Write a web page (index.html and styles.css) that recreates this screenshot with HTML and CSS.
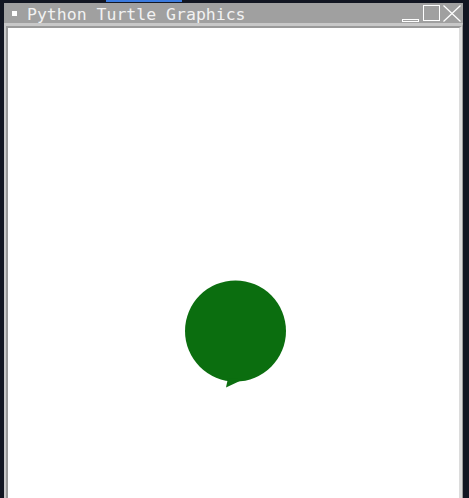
FILE: index.html
```html
<!DOCTYPE html>
<html>
<head>
<meta charset="utf-8">
<link rel="stylesheet" href="styles.css">
</head>
<body>
<div class="topstrip"><div class="tab"></div></div>
<div class="window">
  <div class="titlebar">
    <span class="menu-dot"></span>
    <span class="title">Python Turtle Graphics</span>
    <div class="controls">
      <span class="btn-min"></span>
      <span class="btn-max"></span>
      <svg class="btn-close" width="18" height="17" viewBox="0 0 18 17">
        <path d="M0.5 0.5 L17.5 16.5 M17.5 0.5 L0.5 16.5" stroke="#ffffff" stroke-width="1.2" fill="none"/>
      </svg>
    </div>
  </div>
  <div class="frame">
    <div class="canvas">
      <svg class="drawing" width="451" height="470" viewBox="0 0 451 470">
        <circle cx="227.5" cy="303" r="50.5" fill="#0b6e0f"/>
        <polygon points="218,359.5 220,350 235,351.5" fill="#0b6e0f"/>
      </svg>
    </div>
  </div>
</div>
</body>
</html>
```
FILE: styles.css
```css
html, body {
  margin: 0;
  padding: 0;
  background: #121622;
  width: 469px;
  height: 498px;
  overflow: hidden;
}
.topstrip {
  height: 3px;
  position: relative;
}
.tab {
  margin-left: 106px;
  width: 76px;
  height: 2px;
  background: #3b7be0;
}
.window {
  margin-left: 4px;
  width: 459px;
}
.titlebar {
  height: 20px;
  background: #a0a0a0;
  display: flex;
  align-items: center;
}
.menu-dot {
  width: 5px;
  height: 5px;
  background: #ffffff;
  margin-left: 8px;
  margin-top: 1px;
}
.title {
  margin-left: 10px;
  margin-top: 3px;
  font-family: "DejaVu Sans Mono", monospace;
  font-size: 16.5px;
  color: #f2f2f2;
  line-height: 20px;
  white-space: nowrap;
}
.controls {
  margin-left: auto;
  display: flex;
  align-items: flex-start;
  height: 20px;
  padding-top: 2px;
  box-sizing: border-box;
  margin-right: 2px;
}
.btn-min {
  width: 15px;
  height: 1px;
  border: 1px solid #ffffff;
  margin-top: 14px;
  margin-right: 4px;
}
.btn-max {
  width: 15px;
  height: 14px;
  border: 1px solid #ffffff;
  margin-right: 3px;
}
.btn-close {
  display: block;
}
.frame {
  border-top: 3px solid #c8c8c8;
  border-left: 2px solid #c8c8c8;
  border-right: 1px solid #9a9a9a;
}
.canvas {
  border-top: 2px solid #9a9a9a;
  border-left: 2px solid #9a9a9a;
  border-right: 3px solid #dcdcdc;
  background: #ffffff;
  height: 470px;
}
.drawing {
  display: block;
}
```
